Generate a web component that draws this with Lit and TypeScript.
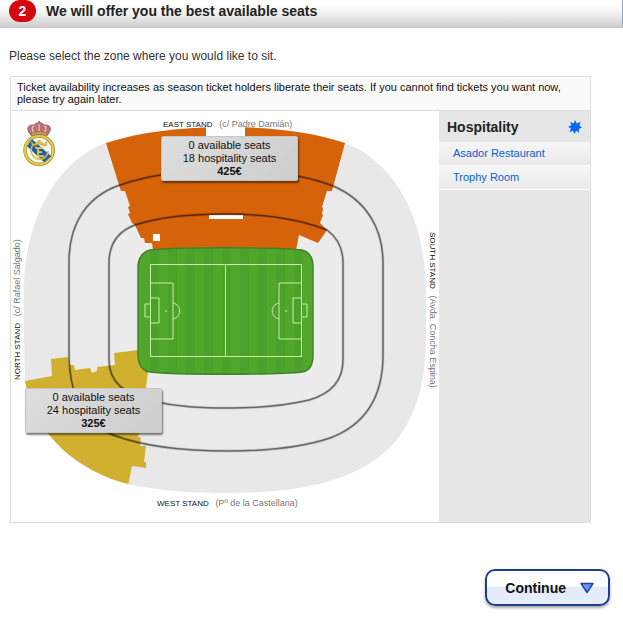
import { LitElement, html, css, svg } from "lit";
import { customElement } from "lit/decorators.js";

const MAP_WIDTH = 428;
const MAP_HEIGHT = 411;

interface Zone {
  x: number;
  y: number;
  available: number;
  hospitality: number;
  price: string;
}

const zones: Zone[] = [
  { x: 150, y: 25, available: 0, hospitality: 18, price: "425€" },
  { x: 14, y: 277, available: 0, hospitality: 24, price: "325€" },
];

const venues = ["Asador Restaurant", "Trophy Room"];

const BOWL =
  "M106 143C140 132 182 127 226 127S312 132 345 143C385 158 426 205 426 295V335C426 430 385 466 323 483C290 491 260 493 228 493S158 491 128 484C80 472 34 436 25 381L24 340V290C24 220 57 160 106 143Z";
const OUTER_RING =
  "M69 262C69 222 88 196 120 185C155 173 190 170 226 170S302 174 333 186C366 200 383 228 383 263V355C383 400 362 426 330 438C300 448 265 451 228 451S145 447 113 435C86 424 69 400 69 352Z";
const INNER_RING =
  "M109 263C109 243 119 231 135 225C162 216 192 214 226 214S297 218 327 230C338 238 343 248 343 263V360C343 382 330 394 309 400C284 406 260 408 230 408S178 407 152 401C124 394 109 382 109 360Z";
const PITCH =
  "M150 250C175 247 277 247 302 250C310 252 313 259 313 267V355C313 364 310 371 302 372C277 375 175 375 150 372C142 371 138 364 138 355V267C138 259 142 252 150 250Z";

@customElement("club-crest")
export class ClubCrest extends LitElement {
  static styles = css`
    :host { display: block; }
    svg { display: block; width: 100%; }
  `;
  render() {
    return html`
      <svg viewBox="0 0 34 46" role="img" aria-label="Club crest">
        <path d="M9 15C3 9 6 4 12 5C14 2 20 2 22 5C28 4 31 9 25 15Z" fill="#c0707a" stroke="#8c5a62" stroke-width=".8" />
        <path d="M12 13C9 9 10 6 12 6M17 13V4M22 13C25 9 24 6 22 6" fill="none" stroke="#ecd9b0" />
        <path d="M9 13Q17 10 25 13V16Q17 13 9 16Z" fill="#c9a256" stroke="#7a5348" stroke-width=".6" />
        <circle cx="17" cy="2.2" r="1.2" fill="#9a7a4a" />
        <circle cx="17" cy="30" r="14" fill="#f6f6f2" stroke="#8a8040" stroke-width="3.4" />
        <circle cx="17" cy="30" r="14" fill="none" stroke="#e8c840" stroke-width="2.4" />
        <path d="M5 26L10 19L29 36L22 42Z" fill="#1f5ea8" />
        <path d="M9 21L12 24L17 20L22 24L25 21L24 26L17 24L10 26Z" fill="#e6c03c" stroke="#a98a30" stroke-width=".5" />
        <path d="M10 26C7 33 12 39 18 39C22 39 25 36 26 31" fill="none" stroke="#dcb83c" stroke-width="1.6" />
        <path d="M21 28H16V36H22M16 32H20M13 27L17 29" fill="none" stroke="#e8c440" stroke-width="1.8" />
      </svg>
    `;
  }
}

@customElement("stadium-map")
export class StadiumMap extends LitElement {
  static styles = css`
    :host { display: block; position: relative; background: #fff; }
    .plan { display: block; width: 100%; }
    .crest { position: absolute; left: 11px; top: 9px; width: 8%; }
    .stand { font: 8px "Liberation Sans", Arial, sans-serif; fill: #111; }
    .street { font-size: 9px; fill: #777; }
    .tip {
      position: absolute;
      box-sizing: border-box;
      width: 137px;
      padding: 2px 0;
      border: 1px solid #c6c6c6;
      border-radius: 2px;
      background: linear-gradient(135deg, #dedede, #cdcdcd);
      box-shadow: 1px 2px 2px rgba(0, 0, 0, 0.5);
      font-size: 11px;
      line-height: 13px;
      text-align: center;
      color: #111;
    }
    .tip p { margin: 0; }
    .tip .price { font-weight: bold; }
  `;

  private marking(right: boolean) {
    const m = (x: number) => (right ? 452 - x : x);
    return svg`<path d=${`M${m(150)} 283H${m(173)}V339H${m(150)}M${m(150)} 298H${m(159)}V323H${m(150)}M${m(150)} 304H${m(145)}V317H${m(150)}M${m(173)} 303C${m(182)} 305 ${m(182)} 317 ${m(173)} 319`} />
      <circle cx=${m(166)} cy="311" r=".5" />`;
  }

  render() {
    const stripes = Array.from({ length: 9 }, (_, i) => 150 + i * 18);
    return html`
      <svg class="plan" viewBox="11 111 ${MAP_WIDTH} ${MAP_HEIGHT}" role="img" aria-label="Stadium plan">
        <defs>
          <clipPath id="bowl"><path d=${BOWL} /></clipPath>
          <clipPath id="pitch"><path d=${PITCH} /></clipPath>
        </defs>
        <path d=${BOWL} fill="#e8e8e8" />
        <path d=${OUTER_RING} fill="#eaeaea" />
        <path d=${INNER_RING} fill="#ececec" />
        <g clip-path="url(#bowl)">
          <path fill="#d6620a" d="M106 143L100 120H350L345 143L333 187L332 191H327L322 207L323 208L322 214L323 215L320 223L327 230L318 243L299 235L296 250H153L152 243H145L144 238H141L135 225L132 223L128 214L130 213L128 207L130 206L125 191H121L119 185Z" />
          <path fill="#d2b02f" d="M20 382L52 376L51 359L68 357L69 365H74L75 370L90 368L92 373L97 371V367L115 365L114 353L138 350L148 373L140 430L138 437L141 438L140 446H146L144 462H146V468L132 466L128 486L80 500L20 440Z" />
        </g>
        <path d="M206 126H245V137H206ZM209 215H243V219H209ZM153 234H160V241H153Z" fill="#fff" />
        <g fill="none" stroke="#000" stroke-opacity=".12" stroke-width="3">
          <path d=${OUTER_RING} />
          <path d=${INNER_RING} />
        </g>
        <g fill="none" stroke="#000" stroke-opacity=".5" stroke-width="1.5">
          <path d=${OUTER_RING} />
          <path d=${INNER_RING} />
        </g>
        <path d=${PITCH} fill="#51a72b" />
        <g clip-path="url(#pitch)" fill="#4ca12b">
          ${stripes.map((x) => svg`<rect x=${x} y="245" width="9" height="130" />`)}
        </g>
        <path d=${PITCH} fill="none" stroke="#40822a" stroke-width="1.5" />
        <g fill="none" stroke="#c4f0a4">
          <rect x="150.5" y="264.5" width="151" height="92" />
          <path d="M225.5 264V356" />
          ${this.marking(false)} ${this.marking(true)}
        </g>
        <text class="stand" x="163" y="127" xml:space="preserve">EAST STAND   <tspan class="street">(c/ Padre Damián)</tspan></text>
        <text class="stand" x="157" y="506" xml:space="preserve">WEST STAND   <tspan class="street">(Pº de la Castellana)</tspan></text>
        <text class="stand" transform="translate(20 380) rotate(-90)" xml:space="preserve">NORTH STAND   <tspan class="street">(c/ Rafael Salgado)</tspan></text>
        <text class="stand" transform="translate(430 232) rotate(90)" xml:space="preserve">SOUTH STAND   <tspan class="street">(Avda. Concha Espina)</tspan></text>
      </svg>
      <club-crest class="crest"></club-crest>
      ${zones.map(
        (z) => html`
          <div class="tip" style="left:${(z.x / MAP_WIDTH) * 100}%;top:${(z.y / MAP_HEIGHT) * 100}%">
            <p>${z.available} available seats</p>
            <p>${z.hospitality} hospitality seats</p>
            <p class="price">${z.price}</p>
          </div>
        `
      )}
    `;
  }
}

@customElement("app-root")
export class AppRoot extends LitElement {
  static styles = css`
    :host {
      display: block;
      background: #fff;
      color: #222;
      font-family: "Liberation Sans", Arial, sans-serif;
    }
    .step {
      display: flex;
      align-items: flex-start;
      gap: 10px;
      height: 28px;
      padding-left: 9px;
      border-right: 1px solid #93a3bd;
      background: linear-gradient(#fff 15%, #ededed 55%, #cbcbcb);
    }
    .number {
      width: 27px;
      height: 22px;
      border-radius: 11px;
      background: #d5070f;
      color: #fff;
      font-size: 14px;
      font-weight: bold;
      line-height: 22px;
      text-align: center;
    }
    h1 { margin: 0; font-size: 14px; line-height: 22px; }
    .intro { margin: 20px 9px 12px; font-size: 12px; line-height: 16px; color: #333; }
    .panel { margin: 0 32px 0 10px; border: 1px solid #dedede; }
    .notice {
      margin: 0;
      padding: 4px 6px 5px;
      border-bottom: 1px solid #dedede;
      background: #fafafa;
      color: #111;
      font-size: 11px;
      line-height: 12px;
    }
    .body { display: flex; }
    .map { flex: 1; }
    .side { width: 151px; background: #e6e6e6; }
    .head { display: flex; align-items: center; justify-content: space-between; padding: 1px 8px 0; height: 30px; }
    h2 { margin: 0; font-size: 14px; }
    .star { width: 14px; height: 14px; }
    ul { list-style: none; margin: 0; padding: 0; }
    .venue {
      display: block;
      padding-left: 14px;
      border-bottom: 1px solid #fff;
      background: linear-gradient(#f6f6f6, #e9e9e9);
      color: #0a5fd0;
      font-size: 11px;
      line-height: 23px;
      text-decoration: none;
    }
    .actions { display: flex; justify-content: flex-end; padding: 46px 13px 29px; }
    .continue {
      display: flex;
      align-items: center;
      gap: 13px;
      height: 37px;
      padding: 0 13px 0 18px;
      border: 2px solid #1d3f8f;
      border-radius: 10px;
      background: linear-gradient(#fff 45%, #e3eafa 50%, #e6edfc);
      box-shadow: 0 2px 3px rgba(0, 0, 0, 0.35);
      color: #111;
      font: bold 14px "Liberation Sans", Arial, sans-serif;
    }
    .arrow { width: 16px; height: 12px; }
  `;

  render() {
    return html`
      <header class="step">
        <span class="number">2</span>
        <h1>We will offer you the best available seats</h1>
      </header>
      <p class="intro">Please select the zone where you would like to sit.</p>
      <section class="panel">
        <p class="notice">
          Ticket availability increases as season ticket holders liberate their seats. If you cannot find tickets you want now, please try again later.
        </p>
        <div class="body">
          <stadium-map class="map"></stadium-map>
          <aside class="side">
            <div class="head">
              <h2>Hospitality</h2>
              <svg class="star" viewBox="0 0 14 14" aria-hidden="true">
                <path d="M7 0L8.7 3.4L12.5 1.8L11.3 5.5L14 7.6L10.8 9L11 12.8L8.2 10.8L6.3 14L5 10.7L1.6 12L2.9 8.6L0 6.6L3.3 5.6L2.3 1.9L5.6 3.5Z" fill="#0b68f5" />
              </svg>
            </div>
            <ul>
              ${venues.map((v) => html`<li><a class="venue" href="#">${v}</a></li>`)}
            </ul>
          </aside>
        </div>
      </section>
      <div class="actions">
        <button class="continue" type="button">
          Continue
          <svg class="arrow" viewBox="0 0 16 12" aria-hidden="true">
            <path d="M2 1.5H14L8 10.5Z" fill="#6a97e8" stroke="#24449a" stroke-width="1.4" stroke-linejoin="round" />
          </svg>
        </button>
      </div>
    `;
  }
}
